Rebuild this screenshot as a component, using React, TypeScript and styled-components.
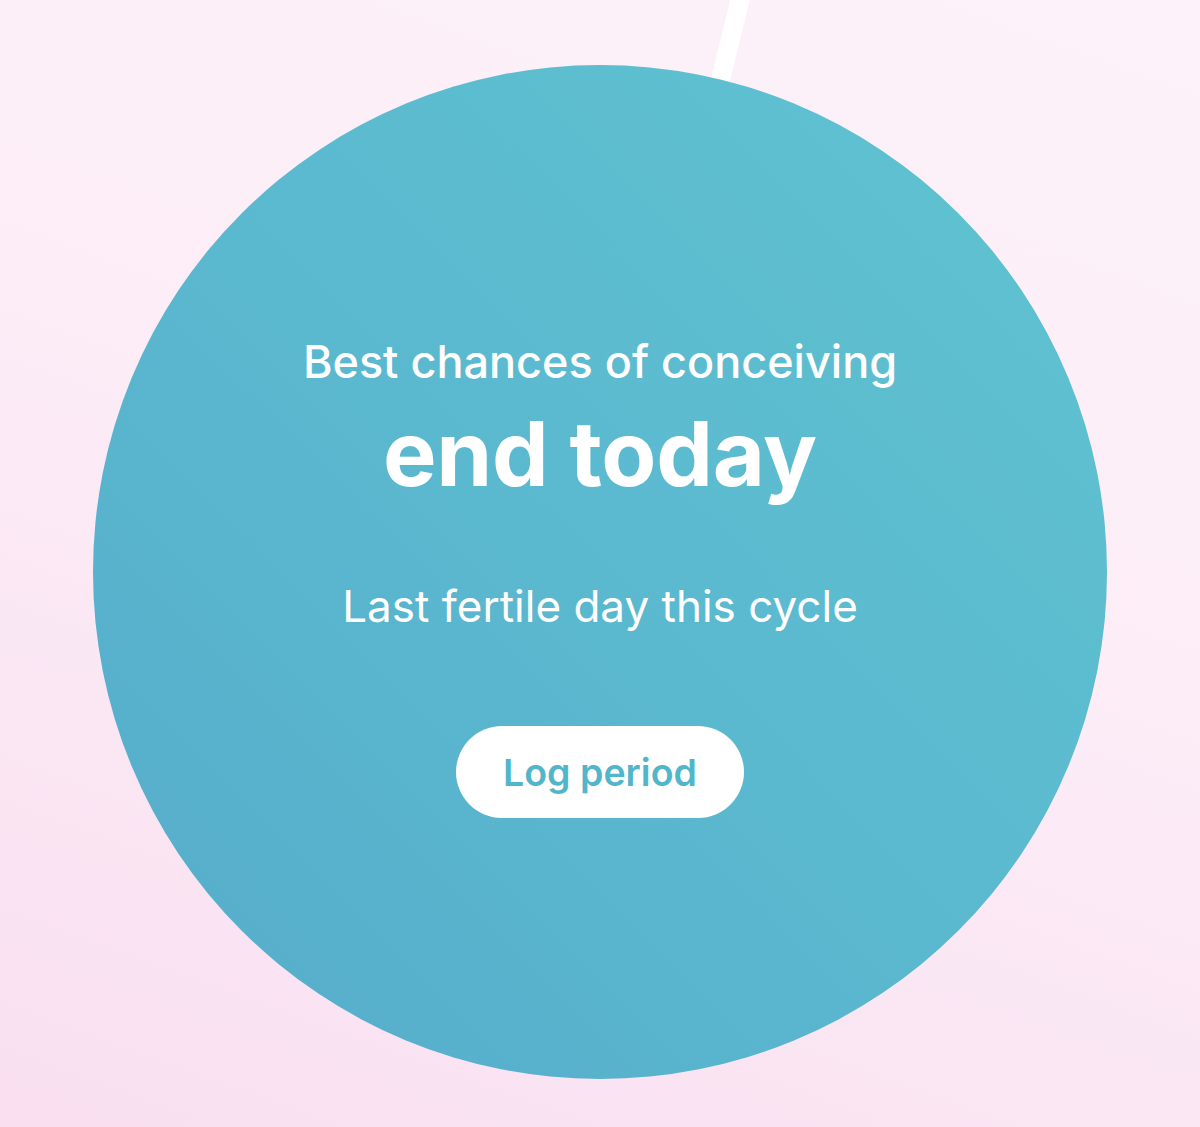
import React from "react";
import styled, { createGlobalStyle } from "styled-components";

const GlobalStyle = createGlobalStyle`
  html, body {
    margin: 0;
    padding: 0;
  }
  body {
    font-family: Inter, "Noto Sans", sans-serif;
    -webkit-font-smoothing: antialiased;
  }
`;

const Screen = styled.div`
  position: relative;
  width: 1200px;
  height: 1127px;
  overflow: hidden;
  display: flex;
  align-items: center;
  justify-content: center;
  background: linear-gradient(200deg, #fdf2f9 0%, #fcedf7 45%, #f9dff0 100%);
`;

const RingTrace = styled.svg`
  position: absolute;
  top: 0;
  left: 0;
  width: 1200px;
  height: 1127px;
`;

const Dial = styled.div`
  position: relative;
  width: 1014px;
  height: 1014px;
  margin-top: 17px;
  border-radius: 50%;
  background: linear-gradient(225deg, #5fc3d0 0%, #5bb9cf 50%, #55abca 100%);
  display: flex;
  flex-direction: column;
  align-items: center;
  color: #ffffff;
`;

const Eyebrow = styled.div`
  margin-top: 269px;
  font-size: 45px;
  font-weight: 500;
  line-height: 56px;
`;

const Headline = styled.div`
  margin-top: 14px;
  font-size: 90px;
  font-weight: 700;
  line-height: 100px;
  letter-spacing: -0.3px;
`;

const Caption = styled.div`
  margin-top: 74px;
  font-size: 44px;
  font-weight: 400;
  line-height: 56px;
`;

const LogButton = styled.button`
  margin-top: 92px;
  width: 288px;
  height: 92px;
  border: none;
  border-radius: 46px;
  background: #ffffff;
  color: #52b6ca;
  font-family: Inter, "Noto Sans", sans-serif;
  font-size: 37.5px;
  font-weight: 600;
  padding: 0;
  cursor: pointer;
`;

export default function App() {
  return (
    <>
      <GlobalStyle />
      <Screen>
        <RingTrace viewBox="0 0 1200 1127">
          <line x1="741" y1="-4" x2="718" y2="90" stroke="#ffffff" strokeWidth="19" />
        </RingTrace>
        <Dial>
          <Eyebrow>Best chances of conceiving</Eyebrow>
          <Headline>end today</Headline>
          <Caption>Last fertile day this cycle</Caption>
          <LogButton>Log period</LogButton>
        </Dial>
      </Screen>
    </>
  );
}
